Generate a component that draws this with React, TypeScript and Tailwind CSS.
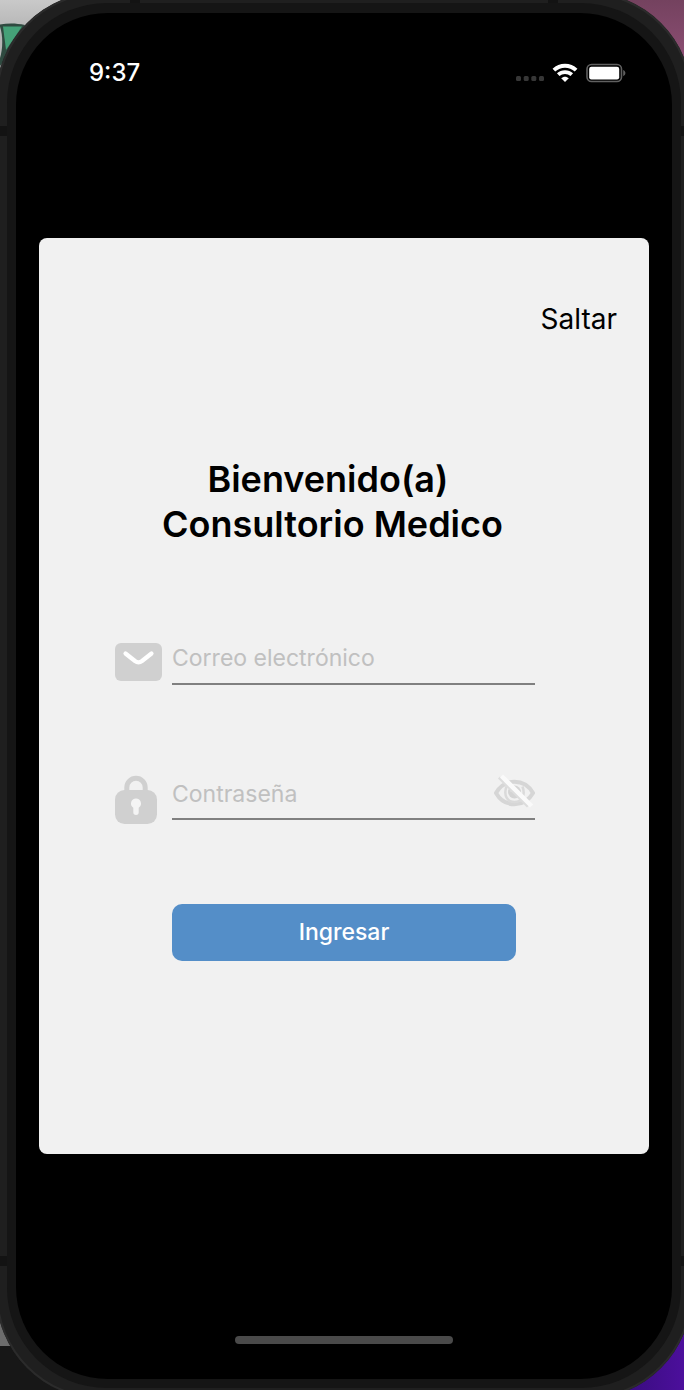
import { useState } from "react";

function SignalDots() {
  return (
    <svg width="28" height="20" viewBox="0 0 28 20" fill="#373737" aria-hidden="true">
      <rect x="0" y="13" width="5" height="5" rx="1.5" />
      <rect x="7.7" y="13" width="5" height="5" rx="1.5" />
      <rect x="15.3" y="13" width="5" height="5" rx="1.5" />
      <rect x="23" y="13" width="5" height="5" rx="1.5" />
    </svg>
  );
}

function WifiIcon() {
  return (
    <svg width="26" height="20" viewBox="0 0 26 20" fill="none" stroke="#fff" aria-hidden="true">
      <path d="M1.900 7.200C8.200 1.300 17.800 1.300 24.100 7.200" strokeWidth="3.900" />
      <path d="M6.200 11.700C10 8.200 16 8.200 19.800 11.700" strokeWidth="3.700" />
      <path d="M13 19 9.200 15.300C11.400 13.200 14.600 13.200 16.800 15.300Z" fill="#fff" stroke="none" />
    </svg>
  );
}

function BatteryIcon() {
  return (
    <svg width="40" height="20" viewBox="0 0 40 20" aria-hidden="true">
      <rect x="1" y="1.5" width="34.5" height="17" rx="4.5" fill="none" stroke="#606060" strokeWidth="1.6" />
      <rect x="3.2" y="3.8" width="30" height="12.6" rx="2.2" fill="#fff" />
      <path d="M37.2 7v6.200c1.300-.5 2.200-1.700 2.200-3.100s-.9-2.600-2.200-3.100Z" fill="#606060" />
    </svg>
  );
}

function MailIcon() {
  return (
    <svg width="48" height="58" viewBox="0 0 48 58" aria-hidden="true">
      <rect x="0" y="12" width="47" height="38" rx="6" fill="#d0d0d0" />
      <path
        d="M10.500 22.500 20 30Q23.500 32.600 27 30L36.500 22.500"
        fill="none"
        stroke="#fff"
        strokeWidth="4.200"
        strokeLinecap="round"
      />
    </svg>
  );
}

function LockIcon() {
  return (
    <svg width="48" height="58" viewBox="0 0 48 58" aria-hidden="true">
      <path d="M11.800 27V21.500a9.200 9.200 0 0 1 18.400 0V27" fill="none" stroke="#d0d0d0" strokeWidth="5" />
      <rect x="0" y="24" width="42" height="34" rx="9.500" fill="#d0d0d0" />
      <path d="M21 32.500a5 5 0 0 0-2.700 9.200v4.500a2.700 2.700 0 0 0 5.400 0v-4.500A5 5 0 0 0 21 32.500Z" fill="#f4f4f4" />
    </svg>
  );
}

function EyeOffIcon() {
  return (
    <svg width="41" height="36" viewBox="0 0 41 36" fill="none" aria-hidden="true">
      <path d="M2 19C10.500 4 30.500 4 39 19C30.500 34 10.500 34 2 19Z" stroke="#d6d6d6" strokeWidth="4" />
      <path d="M12.500 12.500C9 22 14 28 20.500 28S32 22 28.500 12.500" stroke="#dadada" strokeWidth="2.500" />
      <circle cx="20.500" cy="18" r="6.500" fill="#d4d4d4" />
      <path d="M17.500 17.500a3.500 3.500 0 0 1 3.500-3.500" stroke="#efefef" strokeWidth="2" />
      <path d="M5 3.500 34 32.500" stroke="#dddddd" strokeWidth="3" />
      <path d="M7.500 2 37.500 32" stroke="#fafafa" strokeWidth="4.500" />
    </svg>
  );
}

function AntennaBands() {
  return (
    <div aria-hidden="true">
      <span className="absolute left-0 top-[134px] h-[10px] w-[11px] bg-[#131313]" />
      <span className="absolute right-0 top-[134px] h-[10px] w-[11px] bg-[#131313]" />
      <span className="absolute bottom-[133px] left-0 h-[10px] w-[11px] bg-[#131313]" />
      <span className="absolute bottom-[133px] right-0 h-[10px] w-[11px] bg-[#131313]" />
      <span className="absolute left-[134px] top-0 h-[11px] w-[10px] bg-[#131313]" />
      <span className="absolute right-[134px] top-0 h-[11px] w-[10px] bg-[#131313]" />
    </div>
  );
}

function DesktopCorners() {
  return (
    <div aria-hidden="true">
      <div className="absolute left-0 top-0 h-24 w-24 bg-linear-to-b from-[#c9c9c9] to-[#8b8b8b]">
        <svg width="40" height="80" viewBox="0 0 40 80">
          <path d="M0 24.500C8 23 16 23 25 25L8 56 0 66Z" fill="#2f4a40" />
          <path d="M3 26.500H22L6 50Z" fill="#45a178" />
          <path d="M0 26.500C3 36 3 48 0 58Z" fill="#b5b5b5" />
        </svg>
      </div>
      <div className="absolute right-0 top-0 h-24 w-24 bg-linear-to-b from-[#74425f] to-[#9c5580]" />
      <div className="absolute bottom-0 left-0 h-[88px] w-24 bg-linear-to-b from-[#6c6c6c] from-50% to-[#171717] to-50%" />
      <div className="absolute bottom-0 right-0 h-24 w-24 bg-linear-to-r from-[#2c0a6c] to-[#4c0f9c]" />
    </div>
  );
}

export default function App() {
  const [visible, setVisible] = useState(false);

  return (
    <div className="relative flex min-h-screen flex-col overflow-hidden bg-[#1f1f1f] font-['Inter','Liberation_Sans',sans-serif]">
      <DesktopCorners />
      <div className="relative -mb-[9px] -ml-1 -mr-2 -mt-2 flex grow flex-col overflow-hidden rounded-[106px] bg-[#1f1f1f] p-[11px] ring-2 ring-[#2b2b2b] ring-inset">
        <AntennaBands />
        <div className="relative flex grow flex-col rounded-[100px] bg-[#151515] px-[9px] pb-[9px] pt-[10px]">
          <main className="flex grow flex-col rounded-[92px] bg-black px-[23px] pb-[35px] pt-[44px]">
            <header className="flex h-8 items-center justify-between pl-[50px] pr-[23px] text-2xl font-medium text-white">
              <time>9:37</time>
              <div className="flex items-center gap-2">
                <SignalDots />
                <WifiIcon />
                <BatteryIcon />
              </div>
            </header>

            <section className="mt-[149px] rounded-lg bg-[#f1f1f1] pb-[193px] pt-[63px] text-black">
              <div className="flex justify-end pr-8">
                <button type="button" className="text-[28px] leading-9">
                  Saltar
                </button>
              </div>

              <h1 className="mt-[120px] pr-[23px] text-center text-4xl/[45px] font-semibold">
                Bienvenido(a)&nbsp;
                <br />
                Consultorio Medico
              </h1>

              <form className="mt-[84px] pl-[76px] pr-[114px]" onSubmit={(e) => e.preventDefault()}>
                <div className="flex h-[58px] items-start gap-[9px]">
                  <label htmlFor="email" aria-label="Correo electrónico" className="shrink-0">
                    <MailIcon />
                  </label>
                  <input
                    id="email"
                    type="email"
                    placeholder="Correo electrónico"
                    className="h-[54px] min-w-0 grow border-b-2 border-[#808080] bg-transparent pt-0.5 text-[23px] outline-none placeholder:text-[#c0c0c0]"
                  />
                </div>

                <div className="mt-[77px] flex h-[58px] items-start gap-[9px]">
                  <label htmlFor="password" aria-label="Contraseña" className="shrink-0">
                    <LockIcon />
                  </label>
                  <div className="flex h-[54px] min-w-0 grow items-center border-b-2 border-[#808080]">
                    <input
                      id="password"
                      type={visible ? "text" : "password"}
                      placeholder="Contraseña"
                      className="h-full min-w-0 grow bg-transparent pt-1 text-[23px] outline-none placeholder:text-[#c0c0c0]"
                    />
                    <button
                      type="button"
                      aria-label="Mostrar contraseña"
                      aria-pressed={visible}
                      onClick={() => setVisible(!visible)}
                      className="shrink-0"
                    >
                      <EyeOffIcon />
                    </button>
                  </div>
                </div>

                <div className="mt-20 flex pl-[57px] pr-[19px]">
                  <button
                    type="submit"
                    className="h-[57px] grow rounded-[10px] bg-[#548ec8] text-[23px] font-medium text-white"
                  >
                    Ingresar
                  </button>
                </div>
              </form>
            </section>

            <div className="mx-auto mt-auto h-2 w-[218px] rounded-full bg-[#4a4a4a]" />
          </main>
        </div>
      </div>
    </div>
  );
}
